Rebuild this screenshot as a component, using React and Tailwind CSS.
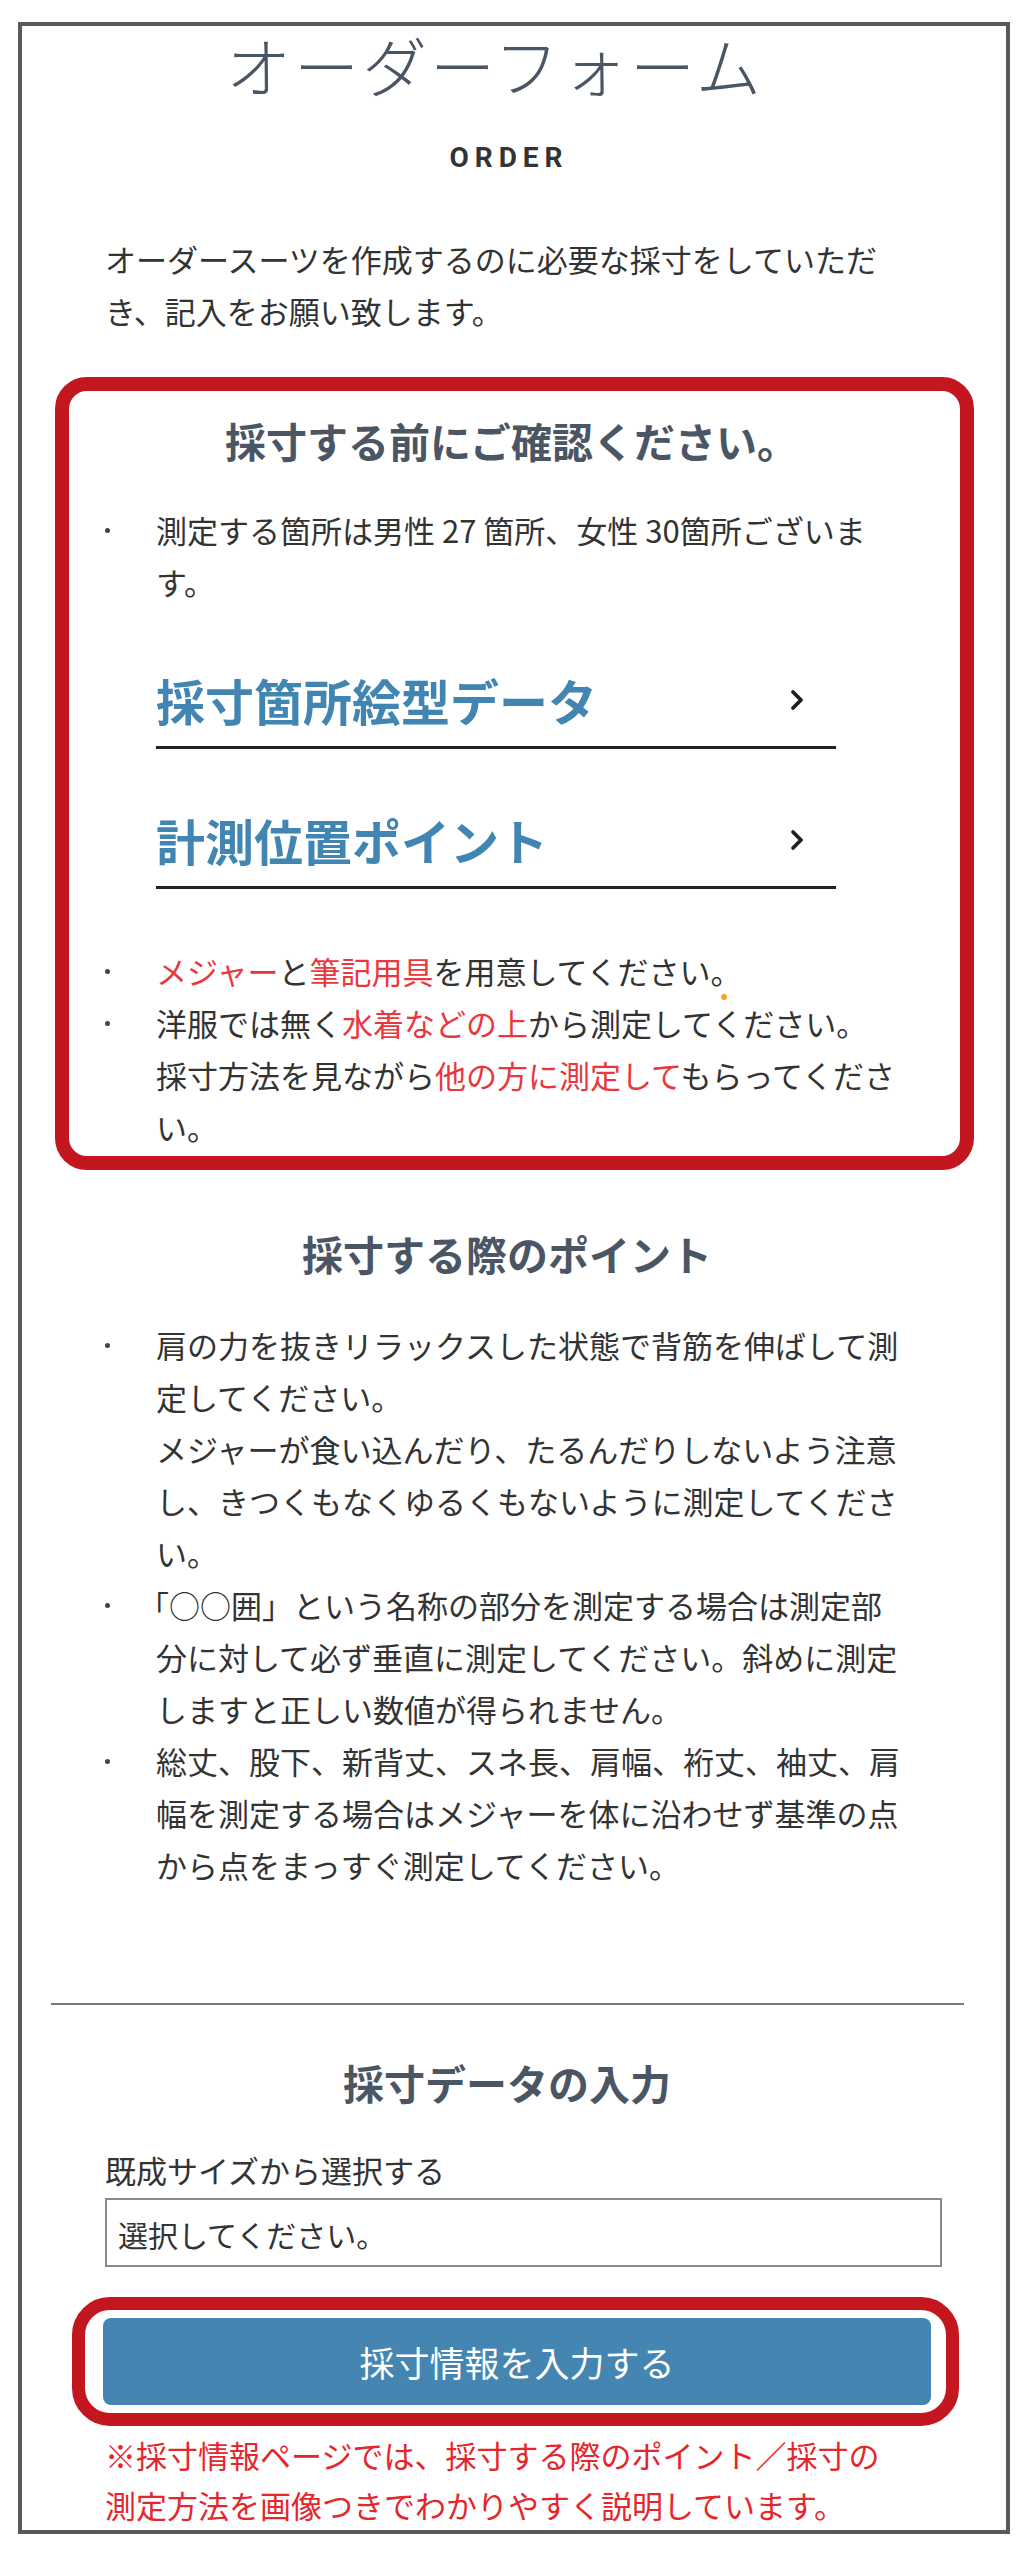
import React from "react";

const Red = ({ children }) => <span className="text-[#e8383d]">{children}</span>;

// one bullet item: small dot on the first line, text lines with explicit breaks
const Bullet = ({ lines }) => (
  <div className="flex">
    <div className="w-[51px] shrink-0 h-[52px] flex items-center">
      <span className="block w-[5px] h-[5px] rounded-full bg-[#444]" />
    </div>
    <div className="whitespace-nowrap">
      {lines.map((l, i) => (
        <div key={i}>{l}</div>
      ))}
    </div>
  </div>
);

const Chevron = () => (
  <svg width="14" height="22" viewBox="0 0 14 22" fill="none">
    <polyline points="3,3 11,11 3,19" stroke="#1f1f1f" strokeWidth="3.8" strokeLinecap="round" strokeLinejoin="round" />
  </svg>
);

const LinkRow = ({ label, className }) => (
  <a href="#" className={"flex items-center justify-between w-[680px] ml-[87px] pr-[32px] pb-[16px] border-b-[3px] border-[#222] " + className}>
    <span className="text-[49px] leading-[60px] font-bold text-[#4186b3]">{label}</span>
    <Chevron />
  </a>
);

const points = [
  [
    "肩の力を抜きリラックスした状態で背筋を伸ばして測",
    "定してください。",
    "メジャーが食い込んだり、たるんだりしないよう注意",
    "し、きつくもなくゆるくもないように測定してくださ",
    "い。",
  ],
  [
    <span className="-ml-[18px]">「○○囲」という名称の部分を測定する場合は測定部</span>,
    "分に対して必ず垂直に測定してください。斜めに測定",
    "しますと正しい数値が得られません。",
  ],
  [
    "総丈、股下、新背丈、スネ長、肩幅、裄丈、袖丈、肩",
    "幅を測定する場合はメジャーを体に沿わせず基準の点",
    "から点をまっすぐ測定してください。",
  ],
];

export default function App() {
  return (
    <div className="bg-white min-h-screen pt-[22px] pb-[24px] font-['Noto_Sans_CJK_JP',sans-serif] text-[#333]">
      <div className="ml-[18px] w-[992px] border-[4px] border-[#5a5a5a]">
        {/* page title */}
        <h1 className="text-center pr-[38px] text-[65px] leading-[76px] font-light tracking-[3px] text-[#4b5665]">
          オーダーフォーム
        </h1>
        <p className="mt-[38px] text-center pr-[10px] text-[28px] leading-[36px] font-bold tracking-[6px] text-[#333] font-['Liberation_Sans_Narrow','Roboto',sans-serif]">
          ORDER
        </p>

        <p className="mt-[57px] ml-[83px] text-[31px] leading-[52px] whitespace-nowrap">
          オーダースーツを作成するのに必要な採寸をしていただ
          <br />
          き、記入をお願い致します。
        </p>

        {/* check box before measuring */}
        <div className="relative mt-[40px] ml-[33px] w-[919px] border-[14px] border-[#c3161f] rounded-[32px] pt-[23px] pb-[3px]">
          <h2 className="text-center pr-[6px] text-[41px] leading-[52px] font-bold text-[#4b5665]">
            採寸する前にご確認ください。
          </h2>

          <div className="mt-[38px] pl-[36px] text-[31px] leading-[52px]">
            <Bullet lines={["測定する箇所は男性 27 箇所、女性 30箇所ございま", "す。"]} />
          </div>

          <LinkRow label="採寸箇所絵型データ" className="mt-[62px]" />
          <LinkRow label="計測位置ポイント" className="mt-[61px]" />

          <div className="mt-[56px] pl-[36px] text-[31px] leading-[52px]">
            <Bullet
              lines={[
                <>
                  <Red>メジャー</Red>と<Red>筆記用具</Red>を用意してください。
                </>,
              ]}
            />
            <Bullet
              lines={[
                <>
                  洋服では無く<Red>水着などの上</Red>から測定してください。
                </>,
                <>
                  採寸方法を見ながら<Red>他の方に測定して</Red>もらってくださ
                </>,
                "い。",
              ]}
            />
          </div>

          <span className="absolute left-[652px] top-[603px] w-[6px] h-[6px] rounded-full bg-[#f2a71b]" />
        </div>

        {/* measuring points */}
        <h2 className="mt-[57px] text-center pr-[14px] text-[41px] leading-[52px] font-bold text-[#4b5665]">
          採寸する際のポイント
        </h2>
        <div className="mt-[40px] ml-[83px] text-[31px] leading-[52px]">
          {points.map((p, i) => (
            <Bullet key={i} lines={p} />
          ))}
        </div>

        <hr className="mt-[112px] ml-[29px] w-[913px] border-0 border-t-[2px] border-[#7a7a7a]" />

        {/* data entry */}
        <h2 className="mt-[51px] text-center pr-[14px] text-[41px] leading-[52px] font-bold text-[#4b5665]">
          採寸データの入力
        </h2>
        <label className="block mt-[36px] ml-[83px] text-[31px] leading-[52px]">既成サイズから選択する</label>
        <div className="mt-[2px] ml-[83px] w-[837px] h-[69px] border-[2px] border-[#8a8a8a] flex items-center pl-[11px] pt-[3px] text-[30px] text-[#333]">
          選択してください。
        </div>

        <div className="mt-[30px] ml-[50px] w-[887px] border-[13px] border-[#c3161f] rounded-[38px] pl-[18px] pr-[15px] py-[8px]">
          <button className="w-full h-[87px] rounded-[8px] bg-[#4486b1] text-white text-[35px] leading-none">
            採寸情報を入力する
          </button>
        </div>

        <p className="mt-[4px] ml-[83px] text-[31px] leading-[50px] text-[#e5262b] whitespace-nowrap">
          ※採寸情報ページでは、採寸する際のポイント／採寸の
          <br />
          測定方法を画像つきでわかりやすく説明しています。
        </p>
      </div>
    </div>
  );
}
